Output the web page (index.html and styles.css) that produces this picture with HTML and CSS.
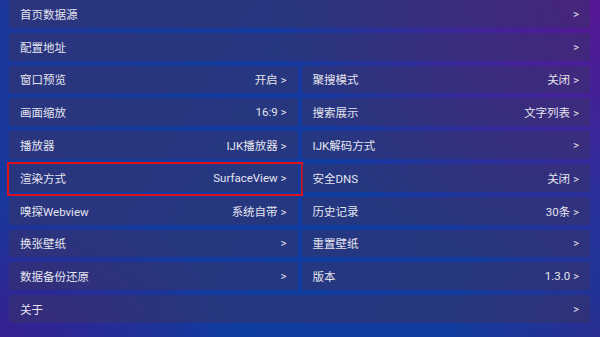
FILE: index.html
```html
<!DOCTYPE html>
<html lang="zh">
<head>
<meta charset="utf-8">
<link rel="stylesheet" href="styles.css">
</head>
<body>
<div class="screen">
  <div class="list">
    <div class="row"><div class="card wide"><span class="label">首页数据源</span><span class="value">&gt;</span></div></div>
    <div class="row"><div class="card wide"><span class="label">配置地址</span><span class="value">&gt;</span></div></div>
    <div class="row">
      <div class="card"><span class="label">窗口预览</span><span class="value">开启 &gt;</span></div>
      <div class="card"><span class="label">聚搜模式</span><span class="value">关闭 &gt;</span></div>
    </div>
    <div class="row">
      <div class="card"><span class="label">画面缩放</span><span class="value">16:9 &gt;</span></div>
      <div class="card"><span class="label">搜索展示</span><span class="value">文字列表 &gt;</span></div>
    </div>
    <div class="row">
      <div class="card"><span class="label">播放器</span><span class="value">IJK播放器 &gt;</span></div>
      <div class="card"><span class="label">IJK解码方式</span><span class="value">&gt;</span></div>
    </div>
    <div class="row">
      <div class="card focused"><span class="label">渲染方式</span><span class="value">SurfaceView &gt;</span></div>
      <div class="card"><span class="label">安全DNS</span><span class="value">关闭 &gt;</span></div>
    </div>
    <div class="row">
      <div class="card"><span class="label">嗅探Webview</span><span class="value">系统自带 &gt;</span></div>
      <div class="card"><span class="label">历史记录</span><span class="value">30条 &gt;</span></div>
    </div>
    <div class="row">
      <div class="card"><span class="label">换张壁纸</span><span class="value">&gt;</span></div>
      <div class="card"><span class="label">重置壁纸</span><span class="value">&gt;</span></div>
    </div>
    <div class="row">
      <div class="card"><span class="label">数据备份还原</span><span class="value">&gt;</span></div>
      <div class="card"><span class="label">版本</span><span class="value">1.3.0 &gt;</span></div>
    </div>
    <div class="row"><div class="card wide"><span class="label">关于</span><span class="value">&gt;</span></div></div>
  </div>
</div>
</body>
</html>
```

FILE: styles.css
```css
html, body {
  margin: 0;
  padding: 0;
  width: 600px;
  height: 337px;
  overflow: hidden;
}

body {
  font-family: Roboto, "Noto Sans CJK SC", sans-serif;
  font-size: 11.5px;
  color: #e4e4ee;
  background:
    radial-gradient(ellipse 330px 280px at 100% 0%, rgba(88, 22, 150, 1) 0%, rgba(88, 22, 150, 0.6) 45%, rgba(88, 22, 150, 0) 100%),
    radial-gradient(ellipse 230px 140px at 0% 100%, rgba(56, 30, 145, 0.95) 0%, rgba(56, 30, 145, 0) 100%),
    radial-gradient(ellipse 150px 140px at 100% 100%, rgba(50, 40, 140, 0.7) 0%, rgba(50, 40, 140, 0) 100%),
    linear-gradient(120deg, #1b379c 0%, #0f3ca0 55%, #143b9e 100%);
}

.screen {
  width: 600px;
  height: 337px;
  box-sizing: border-box;
  padding: 0 10px 0 9px;
}

.list {
  display: flex;
  flex-direction: column;
  gap: 5px;
}

.row {
  display: flex;
  gap: 4px;
  height: 27.8px;
}

.card {
  position: relative;
  flex: 1 1 0;
  display: flex;
  align-items: center;
  justify-content: space-between;
  padding: 0 11px 0 11px;
  border-radius: 2px;
  background: rgba(58, 52, 100, 0.52);
  white-space: nowrap;
}

.card.focused::after {
  content: "";
  position: absolute;
  left: -2px;
  right: -5px;
  top: -2px;
  bottom: -4px;
  border: 2px solid #e0101c;
  pointer-events: none;
}
```
